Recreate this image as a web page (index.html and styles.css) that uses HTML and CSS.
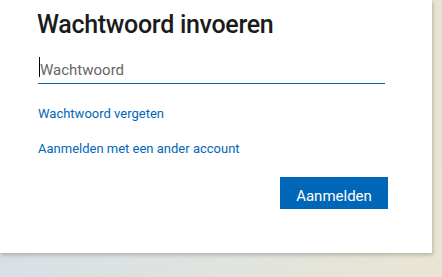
FILE: index.html
```html
<!DOCTYPE html>
<html lang="nl">
<head>
    <meta charset="UTF-8">
    <meta name="viewport" content="width=device-width, initial-scale=1.0">
    <title>Wachtwoord invoeren</title>
    <link rel="stylesheet" href="styles.css">
</head>
<body>
    <div class="card">
        <h1 class="title">Wachtwoord invoeren</h1>
        <div class="field">
            <span class="caret"></span>
            <input type="password" placeholder="Wachtwoord">
        </div>
        <a class="link first" href="#">Wachtwoord vergeten</a>
        <a class="link" href="#">Aanmelden met een ander account</a>
        <div class="actions">
            <button class="primary">Aanmelden</button>
        </div>
    </div>
</body>
</html>
```

FILE: styles.css
```css
html, body {
    height: 100%;
}
body {
    margin: 0;
    font-family: Roboto, "Noto Sans", sans-serif;
    background: linear-gradient(100deg, #d7dee4 0%, #dfe3e0 50%, #e9e5d3 100%);
    overflow: hidden;
}
.card {
    width: 432px;
    height: 253px;
    box-sizing: border-box;
    background: #fff;
    padding: 9px 0 0 37px;
    display: flex;
    flex-direction: column;
    align-items: flex-start;
    box-shadow: 1px 2px 4px rgba(0, 0, 0, 0.22);
}
.title {
    margin: 0;
    font-size: 25px;
    font-weight: 500;
    letter-spacing: -0.3px;
    color: #1b1b1b;
    line-height: 32px;
}
.field {
    position: relative;
    width: 347px;
    margin: 13px 0 0 1px;
    border-bottom: 1px solid #0067b8;
}
.caret {
    position: absolute;
    left: 1px;
    top: 3px;
    width: 1px;
    height: 20px;
    background: #000;
}
.field input {
    display: block;
    width: 100%;
    box-sizing: border-box;
    border: 0;
    outline: 0;
    padding: 7px 0 4px 2px;
    font: inherit;
    font-size: 15px;
    line-height: 18px;
    color: #1b1b1b;
    background: transparent;
}
.field input::placeholder {
    color: #666;
}
.link {
    font-size: 13px;
    color: #0067b8;
    text-decoration: none;
    margin-left: 1px;
    line-height: 18px;
}
.link.first {
    margin-top: 21px;
}
.link + .link {
    margin-top: 17px;
}
.actions {
    align-self: stretch;
    display: flex;
    justify-content: flex-end;
    padding-right: 44px;
    margin-top: 19px;
}
.primary {
    width: 108px;
    height: 32px;
    box-sizing: border-box;
    padding: 6px 0 0;
    border: 0;
    background: #0067b8;
    color: #fff;
    font: inherit;
    font-size: 15px;
    line-height: 26px;
}
```
